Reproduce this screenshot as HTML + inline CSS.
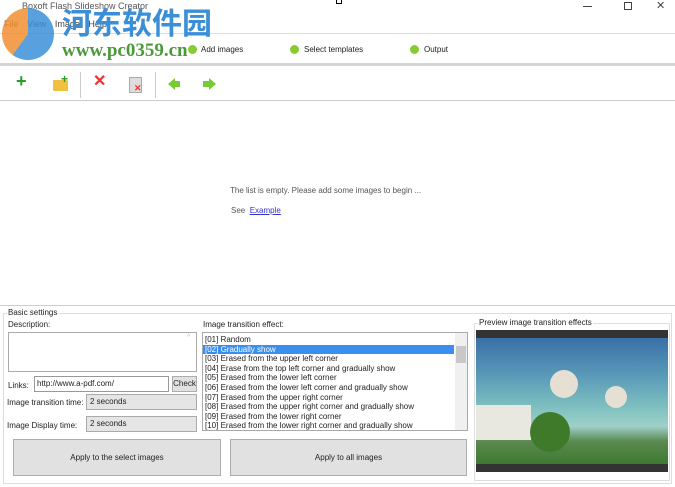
<!DOCTYPE html>
<html><head><meta charset="utf-8"><style>
*{margin:0;padding:0;box-sizing:border-box}
body{width:675px;height:487px;background:#fff;font-family:"Liberation Sans",sans-serif;font-size:8px;color:#222;position:relative;overflow:hidden}
.a{position:absolute}
.sel{border:1px solid #aaa;background:#e5e5e5;height:16px;line-height:14px;padding-left:3px;font-size:8px}
.btn{border:1px solid #adadad;background:#e1e1e1;text-align:center;font-size:8px}
.li{height:9.6px;line-height:9.6px;padding-left:2px;white-space:nowrap;font-size:8px}
</style></head><body>
<div class="a" style="left:22px;top:1px;color:#555;font-size:9px">Boxoft Flash Slideshow Creator</div>
<div class="a" style="left:583px;top:6px;width:9px;height:1px;background:#444"></div>
<div class="a" style="left:624px;top:2px;width:8px;height:8px;border:1px solid #444"></div>
<div class="a" style="left:656px;top:-1px;font-size:11px;color:#444">✕</div>
<div class="a" style="left:336px;top:0;width:6px;height:4px;border:1px solid #000;border-top:none"></div>
<div class="a" style="left:4px;top:19px;color:#444;font-size:9px;word-spacing:6px">File View Image Help</div>
<div class="a" style="left:0;top:33px;width:675px;height:1px;background:#ddd"></div>
<div class="a" style="left:0;top:63px;width:675px;height:3px;background:#d4d4d4"></div>
<div class="a" style="left:188px;top:45px;width:9px;height:9px;border-radius:50%;background:#8c3"></div>
<div class="a" style="left:201px;top:45px;font-size:8px">Add images</div>
<div class="a" style="left:290px;top:45px;width:9px;height:9px;border-radius:50%;background:#8c3"></div>
<div class="a" style="left:304px;top:45px;font-size:8px">Select templates</div>
<div class="a" style="left:410px;top:45px;width:9px;height:9px;border-radius:50%;background:#8c3"></div>
<div class="a" style="left:424px;top:45px;font-size:8px">Output</div>
<!-- toolbar -->
<div class="a" style="left:16px;top:72px;font-size:18px;font-weight:bold;color:#2a9a2a;line-height:18px">+</div>
<div class="a" style="left:53px;top:80px;width:15px;height:11px;background:#f0c040;border-radius:1px"></div>
<div class="a" style="left:61px;top:72px;font-size:12px;font-weight:bold;color:#2a9a2a">+</div>
<div class="a" style="left:80px;top:72px;width:1px;height:26px;background:#ccc"></div>
<div class="a" style="left:93px;top:74px;font-size:16px;color:#e33;font-weight:bold;line-height:16px">✕</div>
<div class="a" style="left:129px;top:77px;width:13px;height:16px;background:#ddd;border:1px solid #aaa"></div>
<div class="a" style="left:134px;top:83px;font-size:9px;color:#e33;font-weight:bold">✕</div>
<div class="a" style="left:155px;top:72px;width:1px;height:26px;background:#ccc"></div>
<div class="a" style="left:168px;top:78px;width:0;height:0;border:6px solid transparent;border-right:7px solid #7c3;border-left:none"></div>
<div class="a" style="left:174px;top:81px;width:6px;height:6px;background:#7c3"></div>
<div class="a" style="left:203px;top:81px;width:6px;height:6px;background:#7c3"></div>
<div class="a" style="left:209px;top:78px;width:0;height:0;border:6px solid transparent;border-left:7px solid #7c3;border-right:none"></div>
<div class="a" style="left:0;top:100px;width:675px;height:1px;background:#ccc"></div>
<div class="a" style="left:0;top:305px;width:675px;height:1px;background:#ccc"></div>
<div class="a" style="left:230px;top:186px;color:#555">The list is empty. Please add some images to begin ...</div>
<div class="a" style="left:231px;top:206px;color:#555">See&nbsp; <span style="color:#33c;text-decoration:underline">Example</span></div>
<!-- basic settings -->
<div class="a" style="left:3px;top:313px;width:669px;height:171px;border:1px solid #ddd"></div>
<div class="a" style="left:7px;top:308px;background:#fff;padding:0 1px">Basic settings</div>
<div class="a" style="left:8px;top:320px">Description:</div>
<div class="a" style="left:8px;top:332px;width:189px;height:40px;border:1px solid #aaa"></div>
<div class="a" style="left:187px;top:334px;color:#bbb;font-size:7px">^</div>
<div class="a" style="left:8px;top:381px">Links:</div>
<div class="a" style="left:34px;top:376px;width:135px;height:16px;border:1px solid #999;line-height:14px;padding-left:2px">http://www.a-pdf.com/</div>
<div class="a btn" style="left:172px;top:376px;width:25px;height:16px;line-height:14px">Check</div>
<div class="a" style="left:7px;top:398px">Image transition time:</div>
<div class="a sel" style="left:86px;top:394px;width:111px">2 seconds</div>
<div class="a" style="left:7px;top:421px">Image Display time:</div>
<div class="a sel" style="left:86px;top:416px;width:111px">2 seconds</div>
<div class="a btn" style="left:13px;top:439px;width:208px;height:37px;line-height:35px">Apply to the select images</div>
<div class="a btn" style="left:230px;top:439px;width:237px;height:37px;line-height:35px">Apply to all images</div>
<div class="a" style="left:203px;top:320px">Image transition effect:</div>
<div class="a" style="left:202px;top:332px;width:266px;height:99px;border:1px solid #aaa;padding-top:2px;overflow:hidden">
<div class="li">[01] Random</div>
<div class="li" style="background:#3a8ef0;color:#fff;width:251px">[02] Gradually show</div>
<div class="li">[03] Erased from the upper left corner</div>
<div class="li">[04] Erase from the top left corner and gradually show</div>
<div class="li">[05] Erased from the lower left corner</div>
<div class="li">[06] Erased from the lower left corner and gradually show</div>
<div class="li">[07] Erased from the upper right corner</div>
<div class="li">[08] Erased from the upper right corner and gradually show</div>
<div class="li">[09] Erased from the lower right corner</div>
<div class="li">[10] Erased from the lower right corner and gradually show</div>
</div>
<div class="a" style="left:455px;top:333px;width:12px;height:97px;background:#f0f0f0"></div>
<div class="a" style="left:456px;top:346px;width:10px;height:17px;background:#c8c8c8"></div>
<div class="a" style="left:474px;top:323px;width:196px;height:158px;border:1px solid #ddd"></div>
<div class="a" style="left:478px;top:318px;background:#fff;padding:0 1px">Preview image transition effects</div>
<div class="a" style="left:476px;top:330px;width:192px;height:142px;background:#333"></div>
<div class="a" style="left:476px;top:338px;width:192px;height:126px;background:linear-gradient(180deg,#3a6fa8 0%,#5a9ab8 30%,#7ec0c0 55%,#9fd0c8 70%,#5a8a50 82%,#3e7a30 100%)"></div>
<div class="a" style="left:476px;top:405px;width:55px;height:35px;background:#e8e8e0"></div>
<div class="a" style="left:530px;top:412px;width:40px;height:40px;border-radius:50%;background:#3f7a2a"></div>
<div class="a" style="left:550px;top:370px;width:28px;height:28px;border-radius:50%;background:#e6e0d4"></div>
<div class="a" style="left:605px;top:386px;width:22px;height:22px;border-radius:50%;background:#e6e0d4"></div>
<!-- watermark -->
<div class="a" style="left:2px;top:8px;width:52px;height:52px;border-radius:50%;background:conic-gradient(#3a8fd8 0 60%,#f09030 60% 100%);opacity:.85"></div>
<div class="a" style="left:62px;top:4px;font-family:'Noto Sans CJK SC',sans-serif;font-size:30px;font-weight:bold;color:#3a8fd8;line-height:34px">河东软件园</div>
<div class="a" style="left:62px;top:40px;font-family:'Liberation Serif',serif;font-size:19px;font-weight:bold;color:#4a9a3a">www.pc0359.cn</div>
</body></html>
